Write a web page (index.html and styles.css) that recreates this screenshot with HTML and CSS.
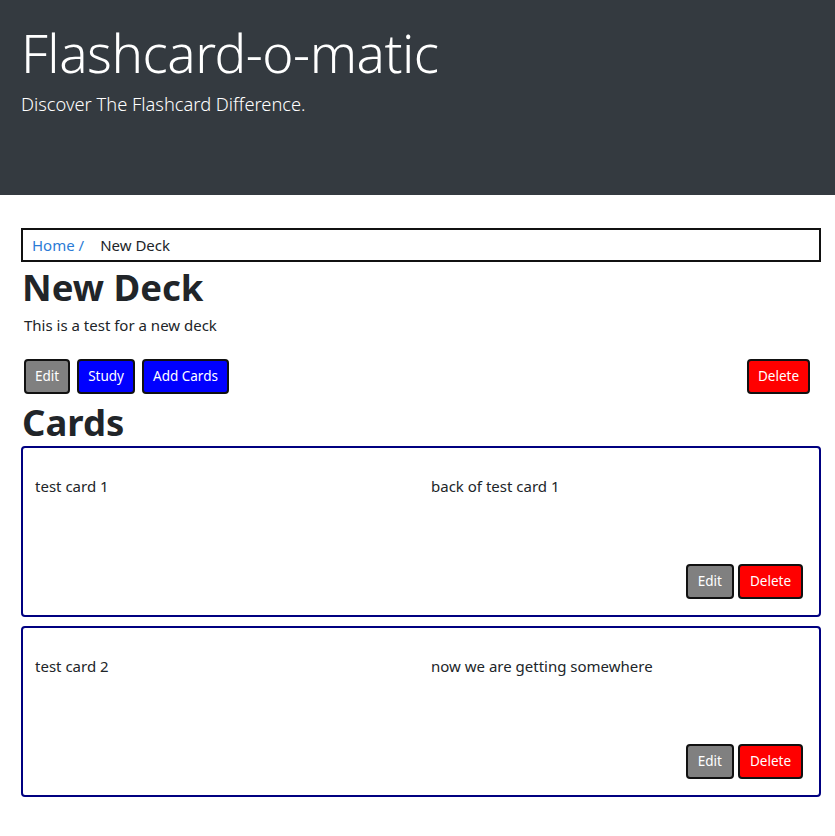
FILE: index.html
```html
<!DOCTYPE html>
<html>
<head>
<meta charset="utf-8">
<link rel="stylesheet" href="styles.css">
</head>
<body>
<header class="jumbo">
  <h1 class="jumbo-title">Flashcard-o-matic</h1>
  <p class="jumbo-lead">Discover The Flashcard Difference.</p>
</header>
<main class="container">
  <nav class="crumbs"><a class="crumb-link" href="#">Home /</a><span class="crumb-current">New Deck</span></nav>
  <h2 class="deck-title">New Deck</h2>
  <p class="deck-desc">This is a test for a new deck</p>
  <div class="deck-actions">
    <button class="btn btn-gray">Edit</button>
    <button class="btn btn-blue">Study</button>
    <button class="btn btn-blue">Add Cards</button>
    <button class="btn btn-red push-right">Delete</button>
  </div>
  <h2 class="cards-title">Cards</h2>
  <section class="card">
    <div class="card-row">
      <p class="card-text">test card 1</p>
      <p class="card-text">back of test card 1</p>
    </div>
    <div class="card-actions">
      <button class="btn btn-gray">Edit</button>
      <button class="btn btn-red">Delete</button>
    </div>
  </section>
  <section class="card">
    <div class="card-row">
      <p class="card-text">test card 2</p>
      <p class="card-text">now we are getting somewhere</p>
    </div>
    <div class="card-actions">
      <button class="btn btn-gray">Edit</button>
      <button class="btn btn-red">Delete</button>
    </div>
  </section>
</main>
</body>
</html>
```
FILE: styles.css
```css
* { box-sizing: border-box; }
body {
  margin: 0;
  font-family: "Noto Sans", "Open Sans", sans-serif;
  color: #212529;
  background: #fff;
  font-size: 15px;
}
.jumbo {
  background: #343a40;
  color: #fff;
  height: 195px;
  padding: 17px 21px 0;
}
.jumbo-title {
  margin: 0;
  font-size: 53px;
  font-weight: 300;
  line-height: 1.37;
  letter-spacing: -0.5px;
}
.jumbo-lead {
  margin: 1px 0 0;
  font-size: 18.3px;
  font-weight: 300;
  line-height: 1.37;
}
.container {
  padding: 33px 14px 20px 21px;
}
.crumbs {
  border: 2px solid #111;
  height: 34px;
  display: flex;
  align-items: center;
  padding-left: 9px;
  font-size: 15px;
}
.crumb-link {
  color: #2b7bd6;
  text-decoration: none;
  margin-right: 16px;
}
.crumb-current { color: #212529; }
.deck-title {
  margin: 4px 0 0 1px;
  font-size: 36.5px;
  font-weight: 700;
  line-height: 1.2;
}
.deck-desc {
  margin: 5px 0 0 3px;
  font-size: 15px;
}
.deck-actions {
  display: flex;
  gap: 7px;
  margin: 24px 11px 0 3px;
}
.push-right { margin-left: auto; }
.btn {
  font-family: inherit;
  font-size: 13.5px;
  color: #fff;
  border: 2px solid #111;
  border-radius: 4px;
  height: 35px;
  padding: 0 9px;
  cursor: pointer;
}
.btn-gray { background: #808080; }
.btn-blue { background: #0000ff; }
.btn-red { background: #ff0000; }
.cards-title {
  margin: 8px 0 4px 1px;
  font-size: 36.5px;
  font-weight: 700;
  line-height: 1.1;
}
.card {
  border: 2px solid #000080;
  border-radius: 4px;
  height: 171px;
  margin-bottom: 9px;
  padding: 28px 16px 16px 12px;
  display: flex;
  flex-direction: column;
}
.card-row {
  display: grid;
  grid-template-columns: 1fr 1fr;
  column-gap: 24px;
}
.card-text {
  margin: 0;
  font-size: 15px;
}
.card-actions {
  margin-top: auto;
  display: flex;
  justify-content: flex-end;
  gap: 4px;
}
.card-actions .btn { padding: 0 10px; }
```
